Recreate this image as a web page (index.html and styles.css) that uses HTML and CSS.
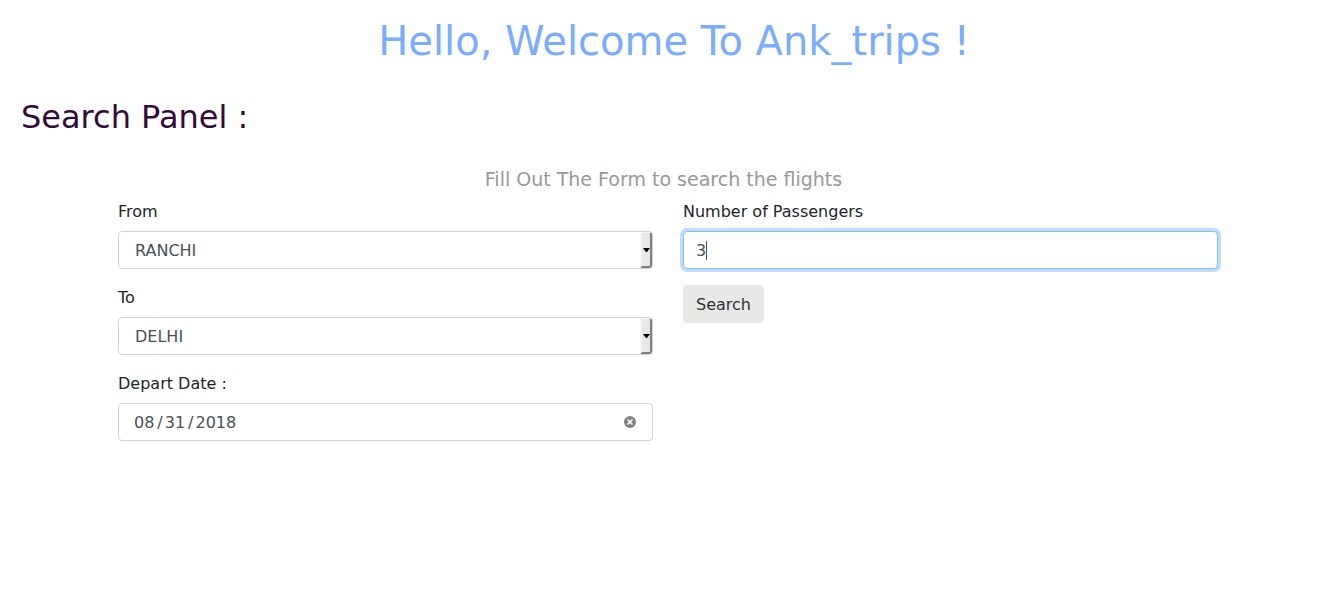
FILE: index.html
```html
<!DOCTYPE html>
<html lang="en">
<head>
<meta charset="utf-8">
<meta name="viewport" content="width=device-width, initial-scale=1">
<title>Ank_trips</title>
<link rel="stylesheet" href="styles.css">
</head>
<body>
<header class="banner"><h1 class="banner-title">Hello, Welcome To Ank_trips !</h1></header>
<main>
  <h2 class="panel-title">Search Panel :</h2>
  <p class="lead">Fill Out The Form to search the flights</p>
  <form class="search-form">
    <div class="column">
      <div class="field">
        <label class="label" for="from">From</label>
        <div class="select-box">
          <select class="control select" id="from"><option>RANCHI</option><option>DELHI</option></select>
          <span class="drop" aria-hidden="true"><svg width="7" height="4" viewBox="0 0 7 4"><path d="M0 0h7L4 4H3z"/></svg></span>
        </div>
      </div>
      <div class="field">
        <label class="label" for="to">To</label>
        <div class="select-box">
          <select class="control select" id="to"><option>DELHI</option><option>RANCHI</option></select>
          <span class="drop" aria-hidden="true"><svg width="7" height="4" viewBox="0 0 7 4"><path d="M0 0h7L4 4H3z"/></svg></span>
        </div>
      </div>
      <div class="field">
        <label class="label" for="depart">Depart Date :</label>
        <div class="date-box">
          <input class="control date" id="depart" type="date" value="2018-08-31">
          <button class="clear" type="button" aria-label="Clear date"><svg width="12" height="12" viewBox="0 0 12 12"><circle cx="6" cy="6" r="6" fill="#808080"/><path d="M3.5 3.5l5 5m0-5l-5 5" stroke="#fff" stroke-width="1.6"/></svg></button>
        </div>
      </div>
    </div>
    <div class="column">
      <div class="field">
        <label class="label" for="passengers">Number of Passengers</label>
        <div class="number-box">
          <input class="control active" id="passengers" type="text" inputmode="numeric" value="3">
          <span class="caret" aria-hidden="true"></span>
        </div>
      </div>
      <button class="search" type="submit">Search</button>
    </div>
  </form>
</main>
</body>
</html>
```
FILE: styles.css
```css
* { box-sizing: border-box; }
body {
  margin: 0;
  background: #fff;
  color: #212529;
  font: 16px/24px "DejaVu Sans", sans-serif;
}
.banner { padding: 17px 0 0 16px; }
.banner-title {
  margin: 0;
  color: #7aacff;
  font-size: 40px;
  font-weight: 400;
  line-height: 48px;
  text-align: center;
}
.panel-title {
  margin: 33px 0 0 21px;
  color: #330a38;
  font-size: 32px;
  font-weight: 400;
  line-height: 38px;
}
.lead {
  margin: 27px 0 0;
  padding-right: 5px;
  color: #999;
  font-size: 19px;
  line-height: 32px;
  text-align: center;
}
.search-form {
  display: grid;
  grid-template-columns: 1fr 1fr;
  gap: 30px;
  margin: 5px 114px 0 118px;
}
.field { margin-bottom: 17px; }
.column > .field:last-of-type { margin-bottom: 16px; }
.label { display: block; margin-bottom: 7px; }
.select-box, .date-box, .number-box { position: relative; }
.control {
  display: block;
  width: 100%;
  height: 38px;
  padding: 6px 12px;
  border: 1px solid #ced4da;
  border-radius: 4px;
  background: #fff;
  color: #495057;
  font: inherit;
  outline: none;
}
.select { appearance: none; padding: 1px 16px 0; }
.drop {
  position: absolute;
  top: 1px;
  right: 1px;
  bottom: 1px;
  display: flex;
  align-items: center;
  justify-content: center;
  width: 12px;
  border: solid #808080;
  border-width: 0 2px 2px 0;
  border-left: 2px solid #f6f6f6;
  border-top: 1px solid #f6f6f6;
  border-radius: 0 3px 3px 0;
  background: #e8e8e7;
  pointer-events: none;
}
.drop svg { flex: none; }
.date { padding: 7px 14px 5px; }
.date::-webkit-calendar-picker-indicator { display: none; }
.date::-webkit-datetime-edit-text { padding: 0 1px 0 2px; }
.clear {
  position: absolute;
  top: 13px;
  right: 17px;
  width: 12px;
  height: 12px;
  padding: 0;
  border: 0;
  background: none;
}
.clear svg { display: block; }
.active {
  border-color: #80bdff;
  box-shadow: 0 0 0 3px #bfdeff;
  caret-color: transparent;
}
.caret {
  position: absolute;
  top: 10px;
  left: 23px;
  width: 1px;
  height: 19px;
  background: #495057;
}
.search {
  display: block;
  height: 38px;
  padding: 7px 13px 5px;
  border: 0;
  border-radius: 4px;
  background: #e8e8e7;
  color: #2e3436;
  font: inherit;
}
```
